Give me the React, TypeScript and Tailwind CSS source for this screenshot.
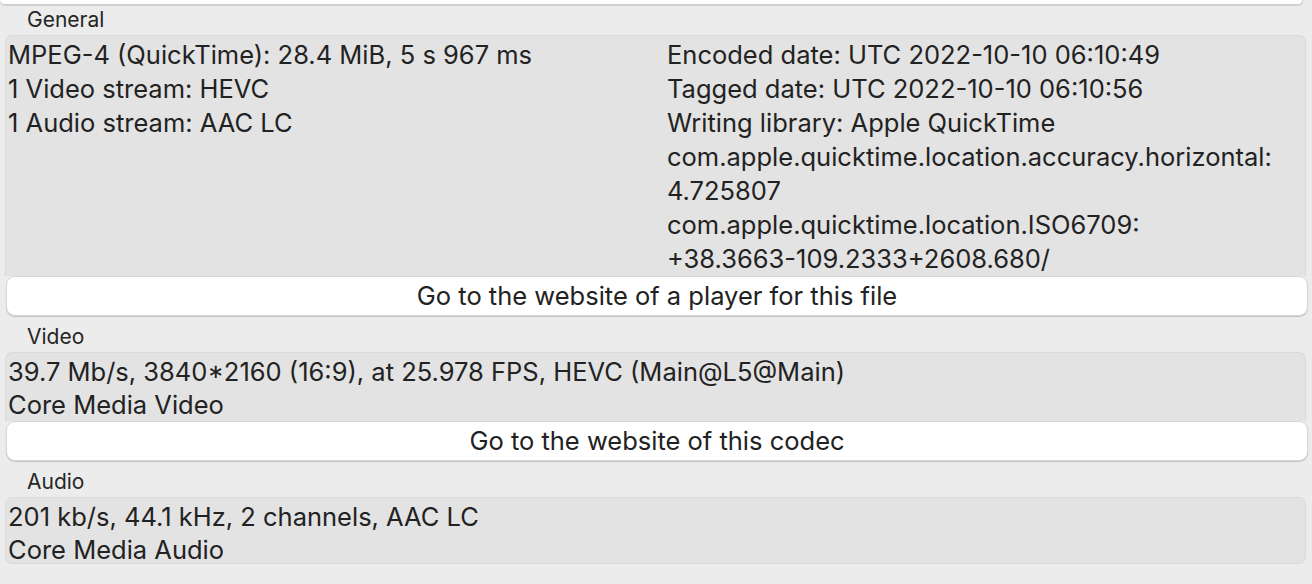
const general = {
  left: [
    "MPEG-4 (QuickTime): 28.4 MiB, 5 s 967 ms",
    "1 Video stream: HEVC",
    "1 Audio stream: AAC LC",
  ],
  right: [
    "Encoded date: UTC 2022-10-10 06:10:49",
    "Tagged date: UTC 2022-10-10 06:10:56",
    "Writing library: Apple QuickTime",
    "com.apple.quicktime.location.accuracy.horizontal:",
    "4.725807",
    "com.apple.quicktime.location.ISO6709:",
    "+38.3663-109.2333+2608.680/",
  ],
};

const Label = ({ text, top }: { text: string; top: string }) => (
  <div className={`${top} h-[30px] pl-[27px] text-[21px] leading-[30px] text-[#262626]`}>
    {text}
  </div>
);

const LinkButton = ({ text }: { text: string }) => (
  <div className="relative ml-[6px] mr-[4px] flex h-[40px] items-center justify-center rounded-[9px] border border-[#d6d6d6] bg-white text-[25.5px] text-[#222] shadow-[0_1px_1px_rgba(0,0,0,0.18)]">
    {text}
  </div>
);

export default function App() {
  return (
    <div className="h-[584px] w-[1312px] overflow-hidden bg-[#ececec] font-['Inter','Liberation_Sans',sans-serif] text-[#222]">
      <div className="mr-[9px] h-[5px] rounded-b-[8px] border-b border-r border-[#cfcfcf] bg-white shadow-[0_1px_1px_rgba(0,0,0,0.12)]" />

      <Label text="General" top="mt-0" />
      <div className="ml-[5px] mr-[6px] rounded-t-[7px] border border-b-0 border-[#dadada] bg-[#e3e3e3] pl-[2px] pt-[2px] text-[25.5px] leading-[34px]">
        <div className="grid grid-cols-[659px_1fr]">
          <div>
            {general.left.map((l) => (
              <div key={l}>{l}</div>
            ))}
          </div>
          <div>
            {general.right.map((l) => (
              <div key={l}>{l}</div>
            ))}
          </div>
        </div>
      </div>
      <LinkButton text="Go to the website of a player for this file" />

      <Label text="Video" top="mt-[6px]" />
      <div className="ml-[5px] mr-[6px] rounded-t-[7px] border border-b-0 border-[#dadada] bg-[#e3e3e3] pl-[2px] pt-[2px] text-[25.5px] leading-[33px]">
        <div>39.7 Mb/s, 3840*2160 (16:9), at 25.978 FPS, HEVC (Main@L5@Main)</div>
        <div>Core Media Video</div>
      </div>
      <LinkButton text="Go to the website of this codec" />

      <Label text="Audio" top="mt-[6px]" />
      <div className="ml-[5px] mr-[6px] h-[67px] rounded-[7px] border border-[#dadada] bg-[#e3e3e3] pl-[2px] pt-[2px] text-[25.5px] leading-[33px]">
        <div>201 kb/s, 44.1 kHz, 2 channels, AAC LC</div>
        <div>Core Media Audio</div>
      </div>
    </div>
  );
}
